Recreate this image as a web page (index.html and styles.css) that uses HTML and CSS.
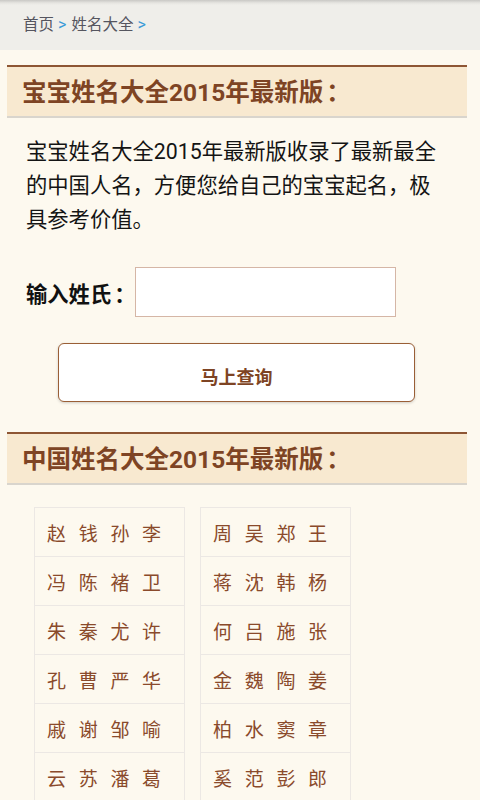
FILE: index.html
```html
<!DOCTYPE html>
<html lang="zh-CN">
<head>
<meta charset="utf-8">
<title>宝宝姓名大全</title>
<link rel="stylesheet" href="styles.css">
</head>
<body>
<nav class="crumbs">
  <a class="crumb" href="#">首页</a><span class="sep">&gt;</span><a class="crumb" href="#">姓名大全</a><span class="sep">&gt;</span>
</nav>
<main class="page">
  <h2 class="title">宝宝姓名大全2015年最新版<span class="tcolon">：</span></h2>
  <p class="intro">宝宝姓名大全2015年最新版收录了最新最全的中国人名，方便您给自己的宝宝起名，极具参考价值。</p>
  <form class="search">
    <label class="search-label" for="surname">输入姓氏<span class="colon">：</span></label>
    <input class="search-input" id="surname" type="text">
  </form>
  <button class="search-btn" type="button">马上查询</button>
  <h2 class="title title-second">中国姓名大全2015年最新版<span class="tcolon">：</span></h2>
  <div class="names">
    <ul class="name-col">
      <li class="name">赵钱孙李</li>
      <li class="name">冯陈褚卫</li>
      <li class="name">朱秦尤许</li>
      <li class="name">孔曹严华</li>
      <li class="name">戚谢邹喻</li>
      <li class="name">云苏潘葛</li>
    </ul>
    <ul class="name-col">
      <li class="name">周吴郑王</li>
      <li class="name">蒋沈韩杨</li>
      <li class="name">何吕施张</li>
      <li class="name">金魏陶姜</li>
      <li class="name">柏水窦章</li>
      <li class="name">奚范彭郎</li>
    </ul>
  </div>
</main>
</body>
</html>
```

FILE: styles.css
```css
html, body {
  margin: 0;
  padding: 0;
}
body {
  background: #fdf9ef;
  font-family: Roboto, "Noto Sans CJK SC", sans-serif;
  width: 480px;
  height: 800px;
  overflow: hidden;
}
.crumbs {
  height: 50px;
  line-height: 50px;
  padding-left: 23px;
  background: linear-gradient(to bottom, #c9c8c5 0, #e6e5e1 3px, #efeeea 5px, #efeeea 100%);
  font-size: 15.5px;
}
.crumb {
  color: #55555f;
  text-decoration: none;
}
.sep {
  color: #3a9ad8;
  font-size: 16px;
  margin: 0 5px 0 4px;
}
.page {
  padding: 15px 13px 0 7px;
}
.title {
  margin: 0;
  height: 49px;
  line-height: 51px;
  border-top: 2px solid #8e5634;
  border-bottom: 2px solid #d9d5cd;
  background: #f8e9d0;
  padding-left: 15px;
  font-size: 24.5px;
  font-weight: bold;
  color: #7e4424;
}
.tcolon {
  display: inline-block;
  padding-left: 3px;
}
.title-second {
  margin-top: 30px;
}
.intro {
  margin: 17px 0 0;
  padding: 0 19px;
  font-size: 21.3px;
  line-height: 34px;
  color: #141414;
}
.search {
  margin: 30px 0 0;
  padding-left: 19px;
  display: flex;
  align-items: center;
}
.search-label {
  font-size: 21.3px;
  font-weight: bold;
  color: #111;
}
.colon {
  display: inline-block;
  padding-left: 3px;
}
.search-input {
  margin: 0 0 0 -1px;
  box-sizing: border-box;
  width: 261px;
  height: 50px;
  border: 1px solid #d5b6a6;
  background: #fff;
  padding: 0 8px;
  font-size: 18px;
  outline: none;
}
.search-btn {
  display: block;
  margin: 26px 0 0 51px;
  box-sizing: border-box;
  width: 357px;
  height: 59px;
  border: 1px solid #9a5f36;
  border-radius: 6px;
  background: #fff;
  box-shadow: 0 1px 3px rgba(0,0,0,0.18);
  font-family: Roboto, "Noto Sans CJK SC", sans-serif;
  font-size: 18px;
  font-weight: bold;
  color: #7e4424;
  padding: 6px 0 0;
}
.names {
  margin-top: 22px;
  padding-left: 27px;
  display: flex;
  gap: 15px;
}
.name-col {
  list-style: none;
  margin: 0;
  padding: 0;
  width: 151px;
  border-top: 1px solid #ece8e4;
}
.name {
  box-sizing: border-box;
  height: 49px;
  line-height: 48px;
  padding: 3px 0 0 12px;
  border: 1px solid #ece8e4;
  border-top: none;
  font-size: 19px;
  letter-spacing: 12.7px;
  color: #8a4a2b;
}
```
